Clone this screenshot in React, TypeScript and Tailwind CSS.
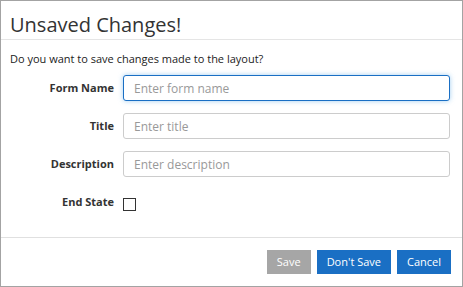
import React from "react";

const fields = [
  { label: "Form Name", placeholder: "Enter form name", focused: true },
  { label: "Title", placeholder: "Enter title", focused: false },
  { label: "Description", placeholder: "Enter description", focused: false },
];

export default function App() {
  return (
    <div
      className="w-[463px] h-[287px] bg-white border border-[#a3a3a3] flex flex-col text-[#333]"
      style={{ fontFamily: '"Open Sans", "Liberation Sans", sans-serif' }}
    >
      {/* Header */}
      <div className="h-[39px] shrink-0 border-b border-[#e5e5e5] pl-[9px] pt-[10px]">
        <h1 className="text-[20px] leading-[27px] font-normal text-[#333]">Unsaved Changes!</h1>
      </div>

      {/* Body */}
      <div className="flex-1 pt-[11px] pl-[9px] pr-[12px]">
        <p className="text-[11px] leading-[15px] text-[#222]">Do you want to save changes made to the layout?</p>

        <div className="mt-[9px] flex flex-col gap-[12px]">
          {fields.map((f) => (
            <div key={f.label} className="flex items-center gap-[9px]">
              <label className="w-[104px] text-right text-[11px] font-bold text-[#333]">{f.label}</label>
              <input
                placeholder={f.placeholder}
                className={
                  "flex-1 h-[26px] rounded-[3px] border bg-white px-[10px] text-[12px] outline-none placeholder:text-[#999] " +
                  (f.focused
                    ? "border-[#1a6fc4] shadow-[0_0_5px_rgba(102,175,233,0.6)]"
                    : "border-[#cccccc]")
                }
              />
            </div>
          ))}

          <div className="flex items-center gap-[9px] pt-[5px]">
            <label className="w-[104px] text-right text-[11px] font-bold text-[#333]">End State</label>
            <span className="mt-[4px] w-[13px] h-[13px] border border-[#333] bg-white" />
          </div>
        </div>
      </div>

      {/* Footer */}
      <div className="h-[49px] shrink-0 border-t border-[#e0e0e0] flex items-start justify-end gap-[6px] pt-[12px] pr-[11px]">
        <button className="h-[24px] px-[10px] bg-[#a6a6a6] text-white text-[11px]">Save</button>
        <button className="h-[24px] px-[10px] bg-[#1a6fc4] text-white text-[11px]">Don't Save</button>
        <button className="h-[24px] px-[10px] bg-[#1a6fc4] text-white text-[11px]">Cancel</button>
      </div>
    </div>
  );
}
